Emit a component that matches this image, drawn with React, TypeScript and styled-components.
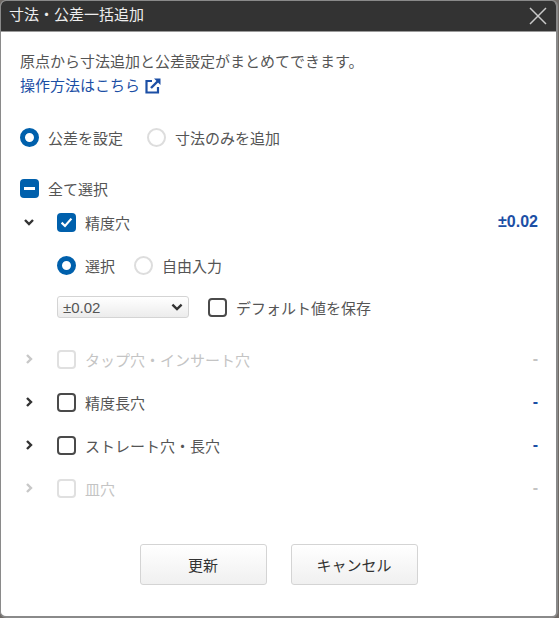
import type { FC, ReactNode } from 'react'
import React from 'react'

import { createGlobalStyle, styled } from 'styled-components'

const MAIN_BLUE = '#0060ac'

const GlobalStyle = createGlobalStyle`
  html, body {
    margin: 0;
    padding: 0;
    background: #6f6a66;
  }
  body {
    font-family: "Liberation Sans", "Noto Sans CJK JP", sans-serif;
    color: #555;
  }
`

const Chevron: FC<{ open?: boolean; muted?: boolean }> = ({ open, muted }) => (
  <ChevronBox>
    <svg width="12" height="12" viewBox="0 0 12 12" fill="none">
      <path
        d={open ? 'M2 4 6 8l4-4' : 'M4 2l4 4-4 4'}
        stroke={muted ? '#c8c8c8' : '#333'}
        strokeWidth="2.4"
      />
    </svg>
  </ChevronBox>
)

const Check: FC<{ state?: 'on' | 'some' | 'off'; disabled?: boolean }> = ({ state = 'off', disabled }) => (
  <CheckBox $filled={state !== 'off'} $disabled={disabled}>
    {state === 'on' && (
      <svg width="13" height="13" viewBox="0 0 13 13" fill="none">
        <path d="M1.6 6.6 5 10l6.4-7.4" stroke="#fff" strokeWidth="2.2" />
      </svg>
    )}
    {state === 'some' && <Dash />}
  </CheckBox>
)

const Radio: FC<{ on?: boolean; children: ReactNode }> = ({ on, children }) => (
  <RadioLabel>
    <RadioDot $on={on} />
    {children}
  </RadioLabel>
)

const Row: FC<{
  label: string
  value: string
  disabled?: boolean
}> = ({ label, value, disabled }) => (
  <ItemRow>
    <Chevron muted={disabled} />
    <Check disabled={disabled} />
    <ItemLabel $disabled={disabled}>{label}</ItemLabel>
    <ItemValue $disabled={disabled}>{value}</ItemValue>
  </ItemRow>
)

const App: FC = () => {
  return (
    <>
      <GlobalStyle />
      <Dialog>
        <Header>
          <Title>寸法・公差一括追加</Title>
          <CloseButton aria-label="close">
            <svg width="18" height="18" viewBox="0 0 18 18" fill="none">
              <path d="M1 1l16 16M17 1 1 17" stroke="#c9c9c9" strokeWidth="1.5" />
            </svg>
          </CloseButton>
        </Header>
        <Body>
          <Description>原点から寸法追加と公差設定がまとめてできます。</Description>
          <HelpLink>
            操作方法はこちら
            <svg width="16" height="16" viewBox="0 0 16 16" fill="none">
              <path d="M7 3H1.5v11.5H13V9" stroke="#1c4fa5" strokeWidth="2.2" />
              <path d="M6 10l8-8" stroke="#1c4fa5" strokeWidth="2.4" />
              <path d="M9 .5h6.5V7z" fill="#1c4fa5" />
            </svg>
          </HelpLink>
          <ModeRow>
            <Radio on>公差を設定</Radio>
            <Radio>寸法のみを追加</Radio>
          </ModeRow>
          <SelectAll>
            <Check state="some" />
            全て選択
          </SelectAll>
          <ItemRow $first>
            <Chevron open />
            <Check state="on" />
            <ItemLabel>精度穴</ItemLabel>
            <ItemValue>±0.02</ItemValue>
          </ItemRow>
          <SubRadios>
            <Radio on>選択</Radio>
            <Radio>自由入力</Radio>
          </SubRadios>
          <SaveRow>
            <FakeSelect>
              ±0.02
              <svg width="12" height="12" viewBox="0 0 12 12" fill="none">
                <path d="M1.4 3.6 6 8l4.6-4.4" stroke="#333" strokeWidth="2.4" />
              </svg>
            </FakeSelect>
            <SaveLabel>
              <Check />
              デフォルト値を保存
            </SaveLabel>
          </SaveRow>
          <Row label="タップ穴・インサート穴" value="-" disabled />
          <Row label="精度長穴" value="-" />
          <Row label="ストレート穴・長穴" value="-" />
          <Row label="皿穴" value="-" disabled />
          <Footer>
            <ActionButton>更新</ActionButton>
            <ActionButton>キャンセル</ActionButton>
          </Footer>
        </Body>
      </Dialog>
    </>
  )
}

export default App

const Dialog = styled.div`
  box-sizing: border-box;
  width: 558px;
  height: 618px;
  border: 1px solid #8a8a8a;
  border-bottom-width: 2px;
  border-right-width: 2px;
  border-radius: 6px;
  background: #fff;
  overflow: hidden;
`

const Header = styled.div`
  box-sizing: border-box;
  height: 31px;
  background: #333;
  border-bottom: 1px solid #9a9a9a;
  display: flex;
  align-items: center;
  justify-content: space-between;
  padding: 0 0 0 8px;
`

const Title = styled.div`
  color: #eee;
  font-size: 15px;
  line-height: 20px;
  margin-bottom: 2px;
`

const CloseButton = styled.div`
  width: 18px;
  height: 18px;
  margin-right: 9px;
  display: flex;
`

const Body = styled.div`
  padding: 19px 18px 0 19px;
  font-size: 15px;
`

const Description = styled.div`
  line-height: 21px;
`

const HelpLink = styled.div`
  margin-top: 3px;
  line-height: 21px;
  color: #1c4fa5;
  display: flex;
  align-items: center;
  gap: 5px;
`

const ModeRow = styled.div`
  margin-top: 29px;
  height: 24px;
  display: flex;
  align-items: center;
  gap: 24px;
`

const RadioLabel = styled.label`
  display: flex;
  align-items: center;
  gap: 9px;
`

const RadioDot = styled.span<{ $on?: boolean }>`
  box-sizing: border-box;
  width: 19px;
  height: 19px;
  border-radius: 50%;
  border: ${(p) => (p.$on ? `5px solid ${MAIN_BLUE}` : '2px solid #ddd')};
  background: #fff;
`

const SelectAll = styled.div`
  margin-top: 27px;
  height: 24px;
  display: flex;
  align-items: center;
  gap: 9px;
`

const CheckBox = styled.span<{ $filled?: boolean; $disabled?: boolean }>`
  box-sizing: border-box;
  flex: none;
  width: 19px;
  height: 19px;
  border-radius: 4px;
  display: flex;
  align-items: center;
  justify-content: center;
  background: ${(p) => (p.$filled ? MAIN_BLUE : '#fff')};
  border: ${(p) => (p.$filled ? 'none' : p.$disabled ? '2px solid #e0e0e0' : '2px solid #4a4a4a')};
`

const Dash = styled.span`
  width: 11px;
  height: 3px;
  background: #fff;
`

const ItemRow = styled.div<{ $first?: boolean }>`
  height: 24px;
  margin-top: ${(p) => (p.$first ? '10px' : '19px')};
  display: flex;
  align-items: center;
`

const ChevronBox = styled.span`
  width: 37px;
  padding-left: 3px;
  box-sizing: border-box;
  display: flex;
`

const ItemLabel = styled.span<{ $disabled?: boolean }>`
  margin-left: 9px;
  color: ${(p) => (p.$disabled ? '#c4c4c4' : '#555')};
`

const ItemValue = styled.span<{ $disabled?: boolean }>`
  margin-left: auto;
  font-size: 16px;
  font-weight: 700;
  color: ${(p) => (p.$disabled ? '#c4c4c4' : '#1c4fa5')};
`

const SubRadios = styled.div`
  margin: 19px 0 0 37px;
  height: 24px;
  display: flex;
  align-items: center;
  gap: 19px;
`

const SaveRow = styled.div`
  margin: 19px 0 29px 37px;
  display: flex;
  align-items: center;
  gap: 19px;
`

const FakeSelect = styled.div`
  box-sizing: border-box;
  width: 132px;
  height: 22px;
  padding: 0 5px;
  border: 1px solid #d4d4d4;
  border-radius: 3px;
  background: linear-gradient(#fff, #ececec);
  display: flex;
  align-items: center;
  justify-content: space-between;
  color: #555;
`

const SaveLabel = styled.label`
  display: flex;
  align-items: center;
  gap: 9px;
`

const Footer = styled.div`
  margin-top: 44px;
  display: flex;
  justify-content: center;
  gap: 24px;
  padding-right: 1px;
`

const ActionButton = styled.div`
  box-sizing: border-box;
  width: 127px;
  height: 41px;
  border: 1px solid #d4d4d4;
  border-radius: 3px;
  background: linear-gradient(#fff, #f0f0f0);
  color: #333;
  display: flex;
  align-items: center;
  justify-content: center;
`
